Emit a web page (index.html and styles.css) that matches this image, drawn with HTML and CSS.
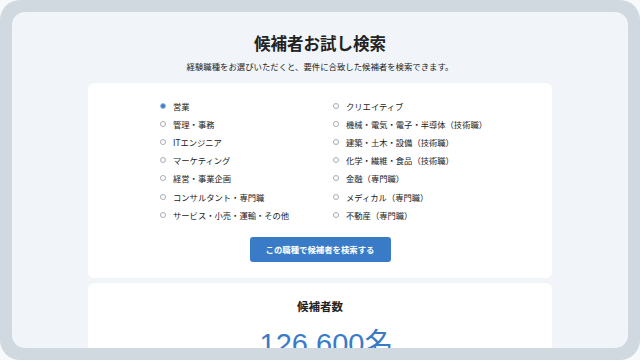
FILE: index.html
```html
<!DOCTYPE html>
<html lang="ja">
<head>
  <meta charset="UTF-8">
  <meta name="viewport" content="width=device-width, initial-scale=1.0">
  <title>候補者お試し検索</title>
  <link rel="stylesheet" href="styles.css">
</head>
<body>
  <div class="frame">
    <main class="panel">
      <h1 class="title">候補者お試し検索</h1>
      <p class="lead">経験職種をお選びいただくと、要件に合致した候補者を検索できます。</p>

      <!-- 職種の選択 -->
      <section class="card search-card">
        <div class="job-grid">
          <label class="job"><input type="radio" name="job" checked><span>営業</span></label>
          <label class="job"><input type="radio" name="job"><span>クリエイティブ</span></label>
          <label class="job"><input type="radio" name="job"><span>管理・事務</span></label>
          <label class="job"><input type="radio" name="job"><span>機械・電気・電子・半導体（技術職）</span></label>
          <label class="job"><input type="radio" name="job"><span>ITエンジニア</span></label>
          <label class="job"><input type="radio" name="job"><span>建築・土木・設備（技術職）</span></label>
          <label class="job"><input type="radio" name="job"><span>マーケティング</span></label>
          <label class="job"><input type="radio" name="job"><span>化学・繊維・食品（技術職）</span></label>
          <label class="job"><input type="radio" name="job"><span>経営・事業企画</span></label>
          <label class="job"><input type="radio" name="job"><span>金融（専門職）</span></label>
          <label class="job"><input type="radio" name="job"><span>コンサルタント・専門職</span></label>
          <label class="job"><input type="radio" name="job"><span>メディカル（専門職）</span></label>
          <label class="job"><input type="radio" name="job"><span>サービス・小売・運輸・その他</span></label>
          <label class="job"><input type="radio" name="job"><span>不動産（専門職）</span></label>
        </div>
        <div class="actions">
          <button class="search-btn">この職種で候補者を検索する</button>
        </div>
      </section>

      <!-- 結果 -->
      <section class="card result-card">
        <h2 class="result-title">候補者数</h2>
        <p class="count"><span class="approx">約</span><span class="num">126,600</span><span class="unit">名</span></p>
      </section>
    </main>
  </div>
</body>
</html>
```

FILE: styles.css
```css
* {
  padding: 0;
  margin: 0;
  box-sizing: border-box;
}

body {
  font-family: "Noto Sans CJK JP", "Noto Sans", sans-serif;
  background-color: #f7f9fb;
  color: #222;
}

.frame {
  width: 640px;
  height: 360px;
  padding: 12px;
  background-color: #d1d9e0;
  border-radius: 20px;
}

.panel {
  height: 336px;
  background-color: #f1f5f9;
  border-radius: 13px;
  overflow: hidden;
  padding-top: 20px;
}

.title {
  font-size: 16.5px;
  font-weight: 700;
  text-align: center;
  line-height: 22px;
}

.lead {
  font-size: 8.4px;
  text-align: center;
  line-height: 12px;
  margin-top: 6px;
}

.card {
  width: 464px;
  margin: 0 auto;
  background-color: #fff;
  border-radius: 6px;
}

.search-card {
  margin-top: 11px;
  padding: 14px 0 16px;
}

.job-grid {
  display: grid;
  grid-template-columns: 173px 173px;
  padding-left: 72px;
}

.job {
  display: flex;
  align-items: center;
  height: 18.1px;
  font-size: 8.3px;
  cursor: pointer;
}

.job input {
  appearance: none;
  width: 6px;
  height: 6px;
  border: 1px solid #a8adb3;
  border-radius: 50%;
  margin-right: 7px;
  flex-shrink: 0;
}

.job input:checked {
  border-color: #9dbde6;
  background-color: #3b7cc8;
}

.actions {
  display: flex;
  justify-content: center;
  margin-top: 13px;
}

.search-btn {
  width: 141px;
  height: 25px;
  background-color: #3a7bc7;
  color: #fff;
  border: none;
  border-radius: 3px;
  font-family: inherit;
  font-size: 8.4px;
  font-weight: 700;
  cursor: pointer;
}

.result-card {
  margin-top: 5px;
  padding-top: 15px;
  text-align: center;
}

.result-title {
  font-size: 11.5px;
  font-weight: 700;
  line-height: 16px;
}

.count {
  margin-top: 10px;
  color: #3a7bc7;
  line-height: 34px;
}

.approx {
  font-size: 7px;
  color: #222;
  margin-right: 6px;
}

.num {
  font-family: "Liberation Sans", sans-serif;
  font-size: 29px;
}

.unit {
  font-size: 29px;
}
```
